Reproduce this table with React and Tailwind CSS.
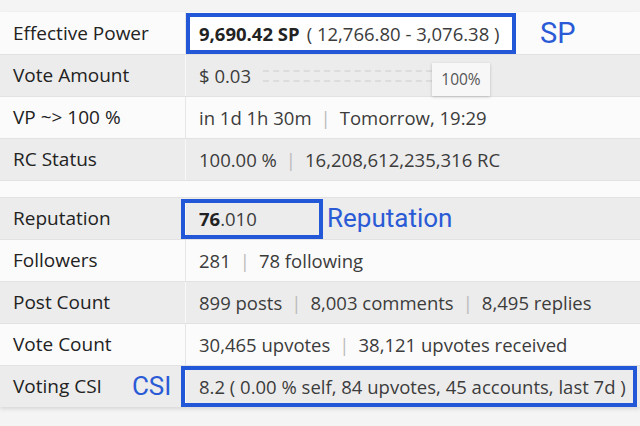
const Sep = () => <span className="mx-[9px] text-[#bbbbbb]">|</span>;

const annot = { fontFamily: 'Roboto, "Noto Sans", sans-serif' };

const Row = ({ label, gray, children, extra }) => (
    <div className={`flex h-[42px] items-center border-t border-[#e2e2e2] ${gray ? 'bg-[#ececec]' : 'bg-[#fbfbfb]'}`}>
        <div className={`w-[186px] h-full flex items-center pl-[13px] text-[19px] border-r ${gray ? 'border-[#f8f8f8]' : 'border-[#e6e6e6]'} text-[#222]`}>
            {label}
            {extra}
        </div>
        <div className="flex-1 h-full flex items-center text-[#3c3c3c]">{children}</div>
    </div>
);

export default function App() {
    return (
        <div className="w-[640px] h-[426px] bg-[#f4f4f4] pt-[12px] overflow-hidden" style={{ fontFamily: '"Open Sans", "Noto Sans", sans-serif' }}>
            <div className="text-[18.5px] bg-white shadow-[0_2px_4px_rgba(0,0,0,0.12)]">
                {/* SP */}
                <div className="flex h-[42px] items-center bg-[#fbfbfb]">
                    <div className="w-[186px] h-full flex items-center pl-[13px] text-[19px] border-r border-[#e6e6e6] text-[#222]">Effective Power</div>
                    <div className="flex-1 h-full flex items-center">
                        <div className="h-[41px] mt-[1px] w-[330px] border-4 border-[#2257d8] flex items-center pl-[9px] text-[#3c3c3c] bg-white">
                            <span className="font-bold text-[#222]">9,690.42 SP</span>
                            <span className="ml-[7px]">( 12,766.80 - 3,076.38 )</span>
                        </div>
                        <span className="ml-[24px] text-[29px] text-[#2a5ad6] leading-none" style={annot}>SP</span>
                    </div>
                </div>

                <Row label="Vote Amount" gray>
                    <span className="pl-[13px]">$ 0.03</span>
                    <div className="ml-[12px] w-[169px] h-[12px] border-y-2 border-dashed border-[#dcdcdc]" />
                    <div className="h-[33px] w-[58px] mt-[8px] bg-[#f7f7f7] shadow-[0_1px_3px_rgba(0,0,0,0.2)] flex items-center justify-center text-[15.5px] text-[#555]">100%</div>
                </Row>

                <Row label="VP ~> 100 %">
                    <span className="pl-[13px]">in 1d 1h 30m</span>
                    <Sep />
                    <span>Tomorrow, 19:29</span>
                </Row>

                <Row label="RC Status" gray>
                    <span className="pl-[13px]">100.00 %</span>
                    <Sep />
                    <span>16,208,612,235,316 RC</span>
                </Row>

                <div className="h-[17px] bg-[#fbfbfb] border-t border-[#e2e2e2]" />

                <Row label="Reputation" gray>
                    <div className="-ml-[5px] h-[40px] w-[142px] border-4 border-[#2257d8] flex items-center pl-[14px]">
                        <span className="font-bold text-[#222]">76</span>.010
                    </div>
                    <span className="ml-[4px] text-[26px] text-[#2a5ad6]" style={annot}>Reputation</span>
                </Row>

                <Row label="Followers">
                    <span className="pl-[13px]">281</span>
                    <Sep />
                    <span>78 following</span>
                </Row>

                <Row label="Post Count" gray>
                    <span className="pl-[13px]">899 posts</span>
                    <Sep />
                    <span>8,003 comments</span>
                    <Sep />
                    <span>8,495 replies</span>
                </Row>

                <Row label="Vote Count">
                    <span className="pl-[13px]">30,465 upvotes</span>
                    <Sep />
                    <span>38,121 upvotes received</span>
                </Row>

                <Row label="Voting CSI" gray extra={<span className="ml-[30px] text-[26px] text-[#2a5ad6]" style={annot}>CSI</span>}>
                    <div className="-ml-[5px] h-[41px] w-[456px] border-4 border-[#2257d8] flex items-center pl-[14px]">
                        8.2 ( 0.00 % self, 84 upvotes, 45 accounts, last 7d )
                    </div>
                </Row>
            </div>
        </div>
    );
}
